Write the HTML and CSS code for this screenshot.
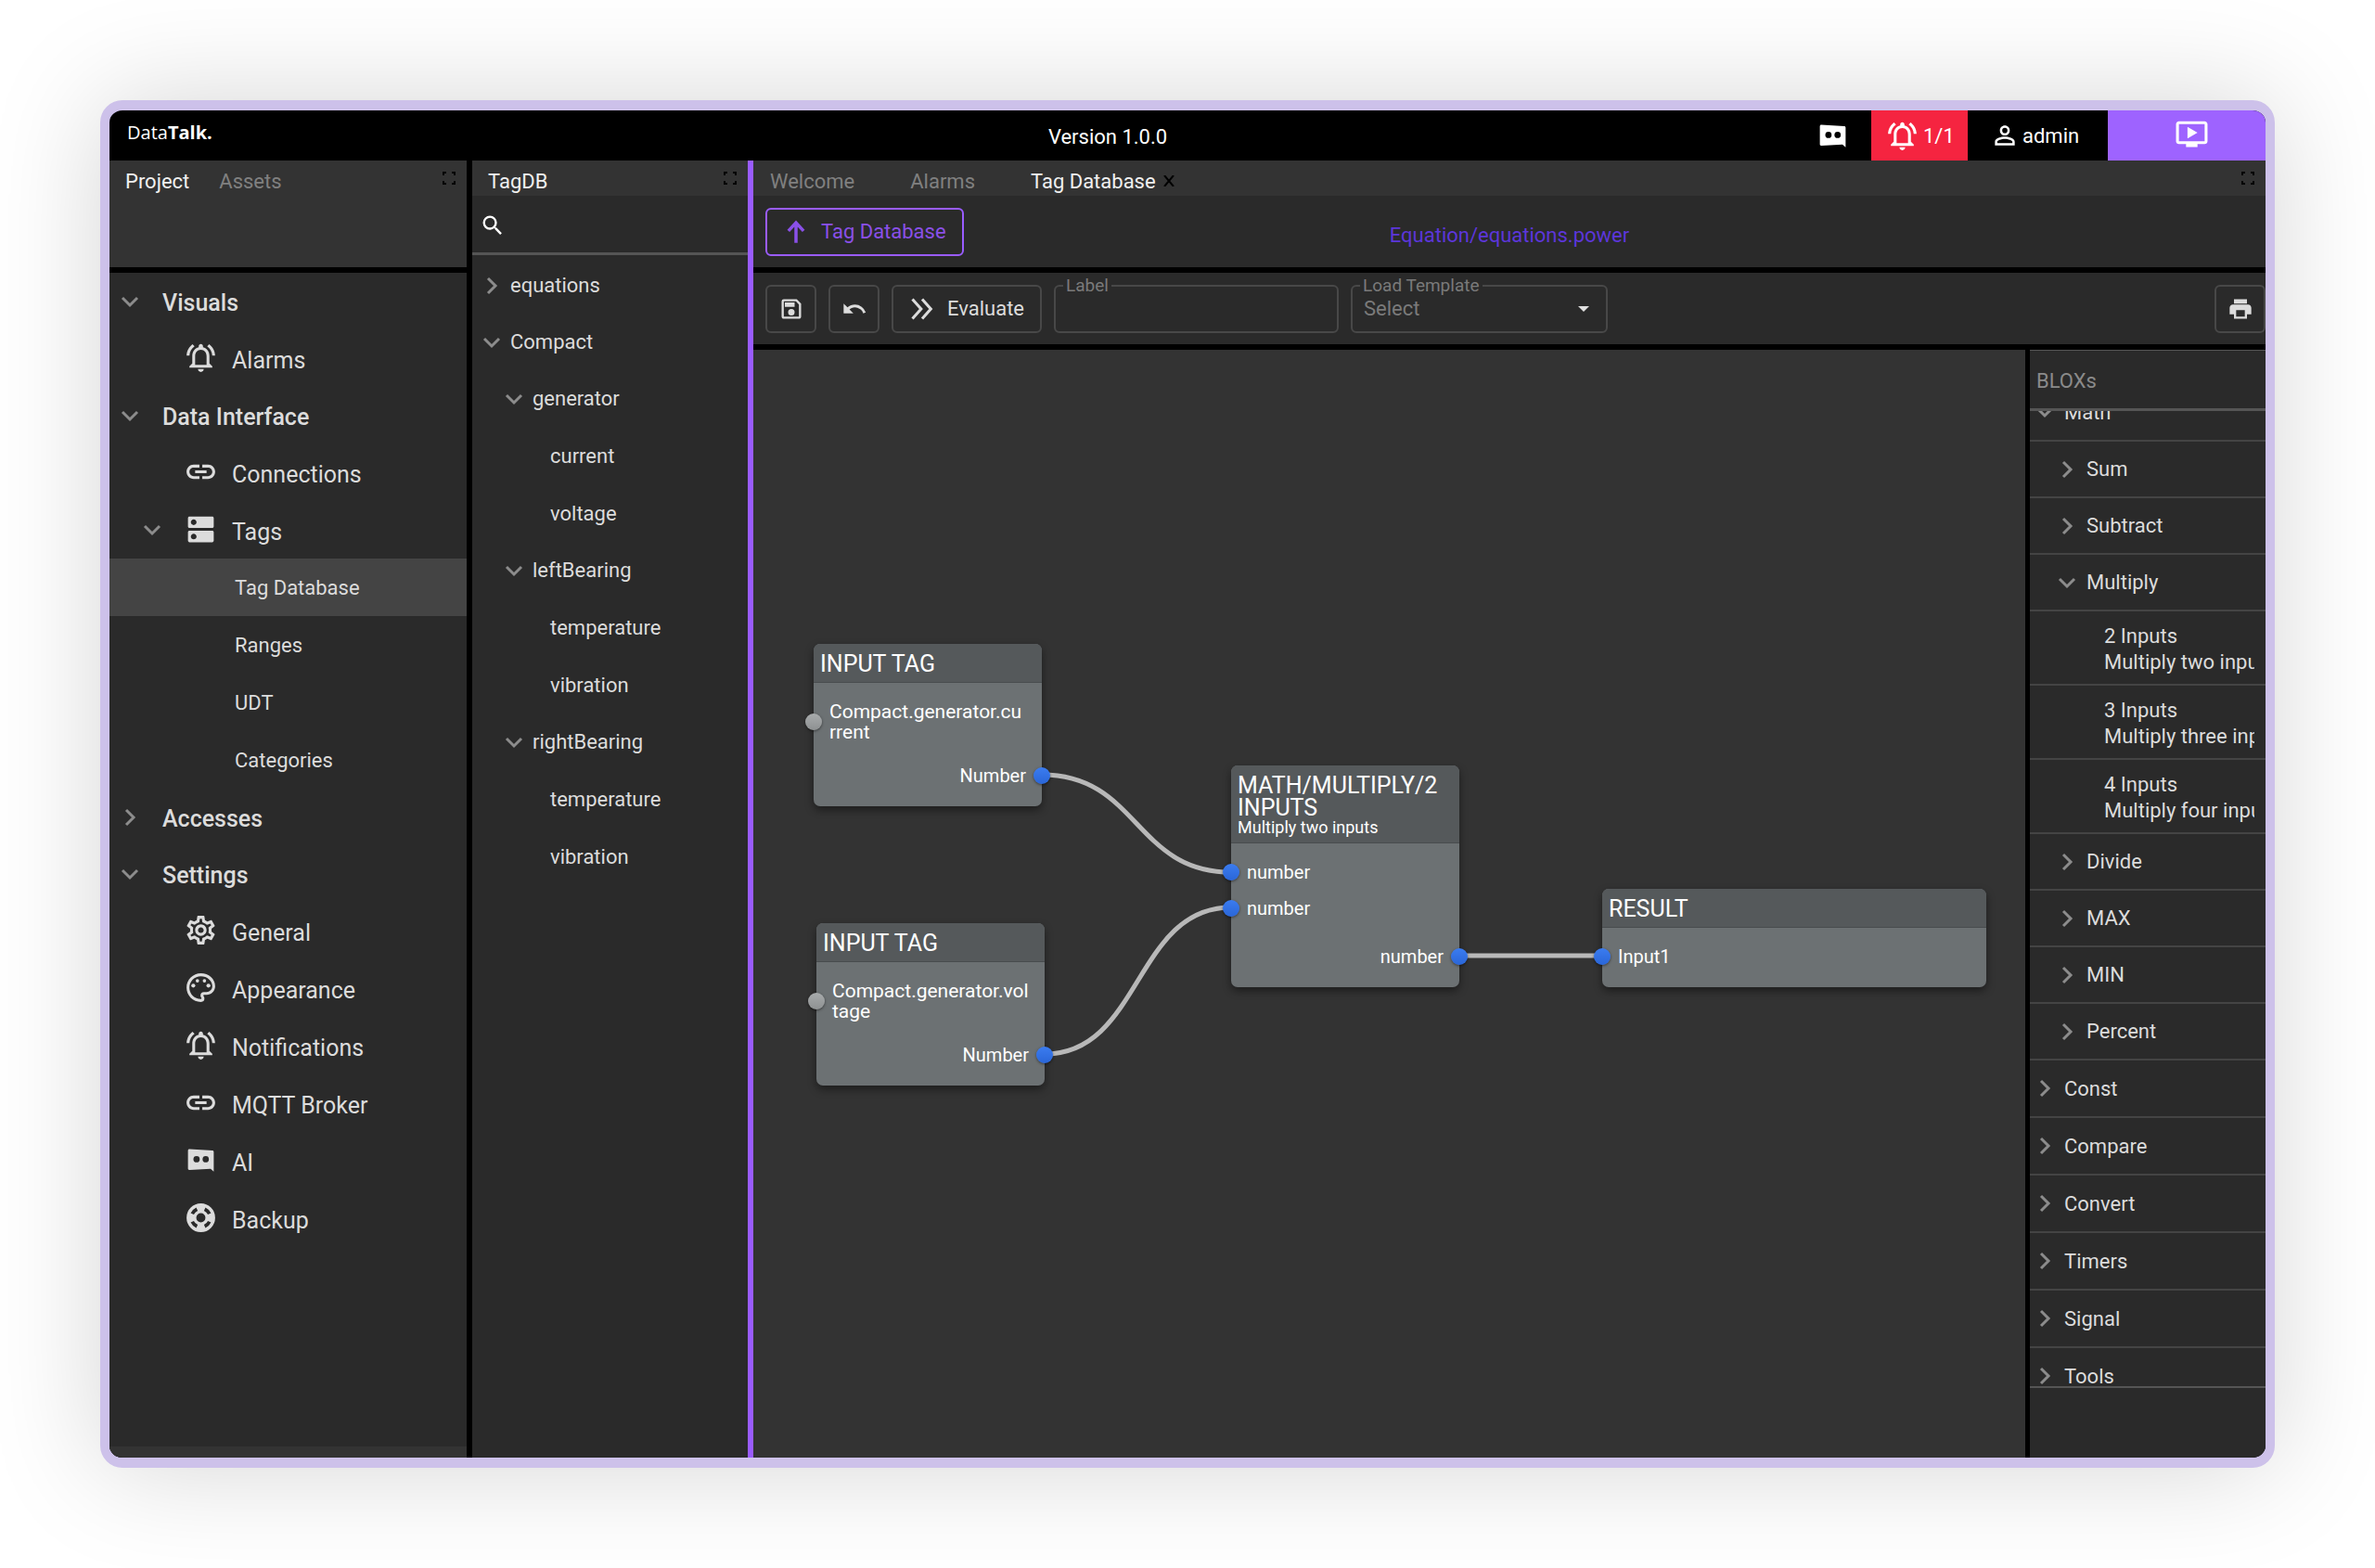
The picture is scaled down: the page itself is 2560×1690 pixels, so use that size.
FILE: index.html
```html
<!DOCTYPE html>
<html lang="en">
<head>
  <meta charset="UTF-8" />
  <meta name="viewport" content="width=device-width, initial-scale=1.0"/>
  <title>DataTalk - Tag Database</title>
  <link rel="stylesheet" href="styles.css">
</head>
<body>
  <!-- icon sprite -->
  <svg class="sprite" aria-hidden="true">
    <symbol id="i-chevron" viewBox="0 0 20 20"><path d="M6 2l8 8-8 8" fill="none" stroke="currentColor" stroke-width="3"/></symbol>
    <symbol id="i-bell" viewBox="0 0 24 24"><path d="M12 22c1.1 0 2-.9 2-2h-4c0 1.1.89 2 2 2zm6-6v-5c0-3.07-1.64-5.64-4.5-6.32V4c0-.83-.67-1.5-1.5-1.5s-1.5.67-1.5 1.5v.68C7.63 5.36 6 7.92 6 11v5l-2 2v1h16v-1l-2-2zm-2 1H8v-6c0-2.48 1.51-4.5 4-4.5s4 2.02 4 4.5v6zM7.58 4.08L6.15 2.65C3.75 4.48 2.17 7.3 2.03 10.5h2c.15-2.65 1.51-4.97 3.55-6.42zm12.39 6.42h2c-.15-3.2-1.73-6.02-4.12-7.85l-1.42 1.43c2.02 1.45 3.39 3.77 3.54 6.42z"/></symbol>
    <symbol id="i-link" viewBox="0 0 24 24"><path d="M17 7h-4v2h4c1.65 0 3 1.35 3 3s-1.35 3-3 3h-4v2h4c2.76 0 5-2.24 5-5s-2.24-5-5-5zm-6 8H7c-1.65 0-3-1.35-3-3s1.35-3 3-3h4V7H7c-2.76 0-5 2.24-5 5s2.24 5 5 5h4v-2zm-3-4h8v2H8z"/></symbol>
    <symbol id="i-dns" viewBox="0 0 24 24"><path d="M20 13H4c-.55 0-1 .45-1 1v6c0 .55.45 1 1 1h16c.55 0 1-.45 1-1v-6c0-.55-.45-1-1-1zM7 19c-1.1 0-2-.9-2-2s.9-2 2-2 2 .9 2 2-.9 2-2 2zM20 3H4c-.55 0-1 .45-1 1v6c0 .55.45 1 1 1h16c.55 0 1-.45 1-1V4c0-.55-.45-1-1-1zM7 9c-1.1 0-2-.9-2-2s.9-2 2-2 2 .9 2 2-.9 2-2 2z"/></symbol>
    <symbol id="i-gear" viewBox="0 0 24 24"><path d="M19.43 12.98c.04-.32.07-.64.07-.98 0-.34-.03-.66-.07-.98l2.11-1.65c.19-.15.24-.42.12-.64l-2-3.46c-.09-.16-.26-.25-.44-.25-.06 0-.12.01-.17.03l-2.49 1c-.52-.4-1.08-.73-1.69-.98l-.38-2.65C14.46 2.18 14.25 2 14 2h-4c-.25 0-.46.18-.49.42l-.38 2.65c-.61.25-1.17.59-1.69.98l-2.49-1c-.06-.02-.12-.03-.18-.03-.17 0-.34.09-.43.25l-2 3.46c-.13.22-.07.49.12.64l2.11 1.65c-.04.32-.07.65-.07.98 0 .33.03.66.07.98l-2.11 1.65c-.19.15-.24.42-.12.64l2 3.46c.09.16.26.25.44.25.06 0 .12-.01.17-.03l2.49-1c.52.4 1.08.73 1.69.98l.38 2.65c.03.24.24.42.49.42h4c.25 0 .46-.18.49-.42l.38-2.65c.61-.25 1.17-.59 1.69-.98l2.49 1c.06.02.12.03.18.03.17 0 .34-.09.43-.25l2-3.46c.12-.22.07-.49-.12-.64l-2.11-1.65zm-1.98-1.71c.04.31.05.52.05.73 0 .21-.02.43-.05.73l-.14 1.13.89.7 1.08.84-.7 1.21-1.27-.51-1.04-.42-.9.68c-.43.32-.84.56-1.25.73l-1.06.43-.16 1.13-.2 1.35h-1.4l-.19-1.35-.16-1.13-1.06-.43c-.43-.18-.83-.41-1.23-.71l-.91-.7-1.06.43-1.27.51-.7-1.21 1.08-.84.89-.7-.14-1.13c-.03-.31-.05-.54-.05-.74s.02-.43.05-.73l.14-1.13-.89-.7-1.08-.84.7-1.21 1.27.51 1.04.42.9-.68c.43-.32.84-.56 1.25-.73l1.06-.43.16-1.13.2-1.35h1.39l.19 1.35.16 1.13 1.06.43c.43.18.83.41 1.23.71l.91.7 1.06-.43 1.27-.51.7 1.21-1.07.85-.89.7.14 1.13zM12 8c-2.21 0-4 1.79-4 4s1.79 4 4 4 4-1.79 4-4-1.79-4-4-4zm0 6c-1.1 0-2-.9-2-2s.9-2 2-2 2 .9 2 2-.9 2-2 2z"/></symbol>
    <symbol id="i-palette" viewBox="0 0 24 24"><path d="M12 22C6.49 22 2 17.51 2 12S6.49 2 12 2s10 4.04 10 9c0 3.31-2.69 6-6 6h-1.77c-.28 0-.5.22-.5.5 0 .12.05.23.13.33.41.47.64 1.06.64 1.67A2.5 2.5 0 0 1 12 22zm0-18c-4.41 0-8 3.59-8 8s3.59 8 8 8c.28 0 .5-.22.5-.5a.54.54 0 0 0-.14-.35c-.41-.46-.63-1.05-.63-1.65a2.5 2.5 0 0 1 2.5-2.5H16c2.21 0 4-1.79 4-4 0-3.86-3.59-7-8-7z"/><circle cx="6.7" cy="10.6" r="1.4"/><circle cx="9.6" cy="7.2" r="1.2"/><circle cx="14.5" cy="7.2" r="1.2"/><circle cx="17.3" cy="10.6" r="1.4"/></symbol>
    <symbol id="i-bot" viewBox="0 0 24 24"><path fill-rule="evenodd" d="M4 4.2L20 5.2c.6 0 1 .4 1 1V20l-2.2-2L4.2 18.8c-.7 0-1.2-.4-1.2-1V5.2c0-.6.4-1 1-1zM9 9.1a2.2 2.2 0 1 0 0 4.4 2.2 2.2 0 1 0 0-4.4zM15.4 9.1a2.2 2.2 0 1 0 0 4.4 2.2 2.2 0 1 0 0-4.4z"/></symbol>
    <symbol id="i-buoy" viewBox="0 0 24 24"><path fill-rule="evenodd" d="M12 2a10 10 0 1 0 0 20 10 10 0 1 0 0-20zM12 8.8a3.2 3.2 0 1 1 0 6.4 3.2 3.2 0 1 1 0-6.4zM8.8 4.9l1 2.2a5.6 5.6 0 0 0-2.7 2.7l-2.2-1a8 8 0 0 1 3.9-3.9zM15.2 4.9a8 8 0 0 1 3.9 3.9l-2.2 1a5.6 5.6 0 0 0-2.7-2.7zM4.9 15.2l2.2-1a5.6 5.6 0 0 0 2.7 2.7l-1 2.2a8 8 0 0 1-3.9-3.9zM19.1 15.2a8 8 0 0 1-3.9 3.9l-1-2.2a5.6 5.6 0 0 0 2.7-2.7z"/></symbol>
    <symbol id="i-user" viewBox="0 0 24 24"><path d="M12 5.9a2.1 2.1 0 1 1 0 4.2 2.1 2.1 0 0 1 0-4.2m0 9c2.97 0 6.1 1.46 6.1 2.1v1.1H5.9V17c0-.64 3.13-2.1 6.1-2.1M12 4C9.79 4 8 5.79 8 8s1.79 4 4 4 4-1.79 4-4-1.79-4-4-4zm0 9c-2.67 0-8 1.34-8 4v3h16v-3c0-2.66-5.33-4-8-4z"/></symbol>
    <symbol id="i-play" viewBox="0 0 24 24"><path d="M21 3H3c-1.11 0-2 .89-2 2v12c0 1.1.89 2 2 2h5v2h8v-2h5c1.1 0 2-.9 2-2V5c0-1.11-.9-2-2-2zm0 14H3V5h18v12zM9 7v8l7-4z"/></symbol>
    <symbol id="i-expand" viewBox="0 0 14 14"><path d="M1 4V1h3M10 1h3v3M13 10v3h-3M4 13H1v-3" fill="none" stroke="currentColor" stroke-width="2"/></symbol>
    <symbol id="i-search" viewBox="0 0 24 24"><path d="M15.5 14h-.79l-.28-.27A6.47 6.47 0 0 0 16 9.5 6.5 6.5 0 1 0 9.5 16c1.61 0 3.09-.59 4.23-1.57l.27.28v.79l5 4.99L20.49 19l-4.99-5zm-6 0a4.5 4.5 0 1 1 0-9 4.5 4.5 0 0 1 0 9z"/></symbol>
    <symbol id="i-up" viewBox="0 0 24 24"><path d="M12 22V4M5 11l7-7.5 7 7.5" fill="none" stroke="currentColor" stroke-width="3"/></symbol>
    <symbol id="i-save" viewBox="0 0 24 24"><path d="M17 3H5a2 2 0 0 0-2 2v14c0 1.1.9 2 2 2h14c1.1 0 2-.9 2-2V7l-4-4zm2 16H5V5h11.17L19 7.83V19zm-7-7a3 3 0 1 0 0 6 3 3 0 0 0 0-6zM6 6h9v4H6z"/></symbol>
    <symbol id="i-undo" viewBox="0 0 24 24"><path d="M12.5 8c-2.65 0-5.05 1-6.9 2.6L2 7v9h9l-3.62-3.62A8 8 0 0 1 20.1 16l2.37-.78A10.5 10.5 0 0 0 12.5 8z"/></symbol>
    <symbol id="i-fast" viewBox="0 0 24 24"><path d="M3 3l8 9-8 9M12 3l8 9-8 9" fill="none" stroke="currentColor" stroke-width="2.6"/></symbol>
    <symbol id="i-print" viewBox="0 0 24 24"><path fill-rule="evenodd" d="M19 8H5c-1.66 0-3 1.34-3 3v6h4v4h12v-4h4v-6c0-1.66-1.34-3-3-3zm-3 11H8v-6h8v6zM6 3h12v4H6z"/></symbol>
  </svg>

  <div class="window">
    <header class="topbar">
      <div class="logo"><span>Data</span>Talk.</div>
      <div class="version">Version 1.0.0</div>
      <button class="top-btn ai" aria-label="AI"><svg class="icon-lg"><use href="#i-bot"/></svg></button>
      <button class="top-btn alert"><svg class="icon-lg"><use href="#i-bell"/></svg>1/1</button>
      <button class="top-btn user"><svg class="icon-md"><use href="#i-user"/></svg>admin</button>
      <button class="top-btn run" aria-label="Run"><svg class="icon-lg"><use href="#i-play"/></svg></button>
    </header>

    <div class="panels">
      <aside class="project">
        <div class="tabs">
          <button class="tab active">Project</button>
          <button class="tab">Assets</button>
          <button class="expand" aria-label="Expand"><svg><use href="#i-expand"/></svg></button>
        </div>
        <div class="project-head"></div>
        <ul class="nav">
          <li><button class="group"><svg class="chev open"><use href="#i-chevron"/></svg>Visuals</button></li>
          <li><a class="item" href="#"><svg class="icon-lg"><use href="#i-bell"/></svg>Alarms</a></li>
          <li><button class="group"><svg class="chev open"><use href="#i-chevron"/></svg>Data Interface</button></li>
          <li><a class="item" href="#"><svg class="icon-lg"><use href="#i-link"/></svg>Connections</a></li>
          <li><a class="item has-children" href="#"><svg class="chev open"><use href="#i-chevron"/></svg><svg class="icon-lg"><use href="#i-dns"/></svg>Tags</a></li>
          <li><a class="leaf selected" href="#">Tag Database</a></li>
          <li><a class="leaf" href="#">Ranges</a></li>
          <li><a class="leaf" href="#">UDT</a></li>
          <li><a class="leaf" href="#">Categories</a></li>
          <li><button class="group"><svg class="chev"><use href="#i-chevron"/></svg>Accesses</button></li>
          <li><button class="group"><svg class="chev open"><use href="#i-chevron"/></svg>Settings</button></li>
          <li><a class="item" href="#"><svg class="icon-lg"><use href="#i-gear"/></svg>General</a></li>
          <li><a class="item" href="#"><svg class="icon-lg"><use href="#i-palette"/></svg>Appearance</a></li>
          <li><a class="item" href="#"><svg class="icon-lg"><use href="#i-bell"/></svg>Notifications</a></li>
          <li><a class="item" href="#"><svg class="icon-lg"><use href="#i-link"/></svg>MQTT Broker</a></li>
          <li><a class="item" href="#"><svg class="icon-lg"><use href="#i-bot"/></svg>AI</a></li>
          <li><a class="item" href="#"><svg class="icon-lg"><use href="#i-buoy"/></svg>Backup</a></li>
        </ul>
      </aside>

      <aside class="tagdb">
        <div class="tabs">
          <button class="tab active">TagDB</button>
          <button class="expand" aria-label="Expand"><svg><use href="#i-expand"/></svg></button>
        </div>
        <label class="search">
          <svg><use href="#i-search"/></svg>
          <input type="text" aria-label="Search tags">
        </label>
        <ul class="tree">
          <li><button><svg class="chev"><use href="#i-chevron"/></svg>equations</button></li>
          <li><button><svg class="chev open"><use href="#i-chevron"/></svg>Compact</button></li>
          <li><button class="sub"><svg class="chev open"><use href="#i-chevron"/></svg>generator</button></li>
          <li><a href="#">current</a></li>
          <li><a href="#">voltage</a></li>
          <li><button class="sub"><svg class="chev open"><use href="#i-chevron"/></svg>leftBearing</button></li>
          <li><a href="#">temperature</a></li>
          <li><a href="#">vibration</a></li>
          <li><button class="sub"><svg class="chev open"><use href="#i-chevron"/></svg>rightBearing</button></li>
          <li><a href="#">temperature</a></li>
          <li><a href="#">vibration</a></li>
        </ul>
      </aside>

      <main class="editor">
        <div class="tabs editor-tabs">
          <button class="tab">Welcome</button>
          <button class="tab">Alarms</button>
          <button class="tab active">Tag Database<svg class="close" viewBox="0 0 12 12"><path d="M1 0l10 12M11 0L1 12"/></svg></button>
          <button class="expand" aria-label="Expand"><svg><use href="#i-expand"/></svg></button>
        </div>

        <div class="crumb-bar">
          <button class="btn btn-primary"><svg><use href="#i-up"/></svg>Tag Database</button>
          <span class="crumb">Equation/equations.power</span>
        </div>

        <div class="toolbar">
          <button class="btn btn-icon" aria-label="Save"><svg><use href="#i-save"/></svg></button>
          <button class="btn btn-icon" aria-label="Undo"><svg><use href="#i-undo"/></svg></button>
          <button class="btn btn-eval"><svg><use href="#i-fast"/></svg>Evaluate</button>
          <div class="field field-label">
            <label for="label">Label</label>
            <input id="label" type="text">
          </div>
          <div class="field field-template">
            <label for="template">Load Template</label>
            <select id="template"><option>Select</option></select>
            <svg class="caret" viewBox="0 0 12 6"><path d="M0 0h12l-6 6z"/></svg>
          </div>
          <button class="btn btn-icon btn-print" aria-label="Print"><svg><use href="#i-print"/></svg></button>
        </div>

        <div class="workspace">
          <div class="canvas">
            <svg class="wires">
              <path d="M311 458C415 458 411 563 515 563"/>
              <path d="M314 759C418 759 411 601 515 601"/>
              <path d="M760 653H915"/>
            </svg>

            <section class="node node-current">
              <h3>INPUT TAG</h3>
              <div class="node-body">
                <div class="in tag"><i class="socket text"></i>Compact.generator.current</div>
                <div class="out">Number<i class="socket"></i></div>
              </div>
            </section>

            <section class="node node-voltage">
              <h3>INPUT TAG</h3>
              <div class="node-body">
                <div class="in tag"><i class="socket text"></i>Compact.generator.voltage</div>
                <div class="out">Number<i class="socket"></i></div>
              </div>
            </section>

            <section class="node node-multiply">
              <h3>MATH/MULTIPLY/2 INPUTS<small>Multiply two inputs</small></h3>
              <div class="node-body">
                <div class="in"><i class="socket"></i>number</div>
                <div class="in"><i class="socket"></i>number</div>
                <div class="out">number<i class="socket"></i></div>
              </div>
            </section>

            <section class="node node-result">
              <h3>RESULT</h3>
              <div class="node-body">
                <div class="in"><i class="socket"></i>Input1</div>
              </div>
            </section>
          </div>

          <aside class="blox">
            <h2>BLOXs</h2>
            <div class="blox-scroll">
              <ul>
                <li><button><svg class="chev open"><use href="#i-chevron"/></svg>Math</button></li>
                <li><button class="sub"><svg class="chev"><use href="#i-chevron"/></svg>Sum</button></li>
                <li><button class="sub"><svg class="chev"><use href="#i-chevron"/></svg>Subtract</button></li>
                <li><button class="sub"><svg class="chev open"><use href="#i-chevron"/></svg>Multiply</button></li>
                <li class="block"><p>2 Inputs<br>Multiply two inputs</p></li>
                <li class="block"><p>3 Inputs<br>Multiply three inputs</p></li>
                <li class="block"><p>4 Inputs<br>Multiply four inputs</p></li>
                <li><button class="sub"><svg class="chev"><use href="#i-chevron"/></svg>Divide</button></li>
                <li><button class="sub"><svg class="chev"><use href="#i-chevron"/></svg>MAX</button></li>
                <li><button class="sub"><svg class="chev"><use href="#i-chevron"/></svg>MIN</button></li>
                <li><button class="sub"><svg class="chev"><use href="#i-chevron"/></svg>Percent</button></li>
                <li><button><svg class="chev"><use href="#i-chevron"/></svg>Const</button></li>
                <li><button><svg class="chev"><use href="#i-chevron"/></svg>Compare</button></li>
                <li><button><svg class="chev"><use href="#i-chevron"/></svg>Convert</button></li>
                <li><button><svg class="chev"><use href="#i-chevron"/></svg>Timers</button></li>
                <li><button><svg class="chev"><use href="#i-chevron"/></svg>Signal</button></li>
                <li><button><svg class="chev"><use href="#i-chevron"/></svg>Tools</button></li>
              </ul>
            </div>
          </aside>
        </div>
      </main>
    </div>
  </div>
</body>
</html>
```
FILE: styles.css
```css
* {
  box-sizing: border-box;
}

body {
  margin: 0;
  padding: 108px;
  min-height: 100vh;
  display: flex;
  background: #fff;
  font-family: Roboto, "Liberation Sans", sans-serif;
  font-size: 22px;
  color: #dcdcdc;
}

ul {
  list-style: none;
  margin: 0;
  padding: 0;
}

button {
  background: none;
  border: none;
  padding: 0;
  margin: 0;
  font: inherit;
  color: inherit;
  text-align: left;
  cursor: pointer;
}

a {
  color: inherit;
  text-decoration: none;
}

svg {
  fill: currentColor;
  flex-shrink: 0;
}

.sprite {
  position: absolute;
  width: 0;
  height: 0;
}

.icon-md {
  width: 32px;
  height: 32px;
}

.icon-lg {
  width: 37px;
  height: 37px;
}

.chev {
  width: 20px;
  height: 20px;
  color: #8c8c8c;
}

.chev.open {
  transform: rotate(90deg);
}

/* window */
.window {
  flex: 1;
  min-width: 0;
  display: flex;
  flex-direction: column;
  background: #000;
  border: 11px solid #cdc1ea;
  border-width: 11px 10px;
  border-radius: 24px;
  overflow: hidden;
  box-shadow: 0 0 120px rgba(0, 0, 0, 0.17);
}

.topbar {
  display: flex;
  height: 54px;
  color: #fff;
}

.logo {
  width: 335px;
  padding: 10px 0 0 19px;
  font-family: "Open Sans", sans-serif;
  font-size: 20px;
  line-height: 28px;
  font-weight: 700;
}

.logo span {
  font-weight: 400;
}

.version {
  flex: 1;
  text-align: center;
  line-height: 58px;
}

.top-btn {
  display: flex;
  align-items: center;
}

.ai {
  width: 82px;
  padding-left: 22px;
}

.alert {
  width: 104px;
  padding-left: 15px;
  gap: 4px;
  background: #f52440;
}

.user {
  width: 151px;
  padding-left: 24px;
  gap: 3px;
}

.run {
  width: 170px;
  padding-left: 72px;
  padding-bottom: 4px;
  background: #9e63ff;
}

.panels {
  flex: 1;
  display: flex;
  min-height: 0;
}

/* tabs */
.tabs {
  display: flex;
  align-items: center;
  height: 38px;
  padding: 0 12px 0 17px;
  gap: 32px;
  background: #333;
  color: #808080;
}

.tab {
  display: flex;
  align-items: center;
  gap: 8px;
  height: 38px;
  padding-top: 6px;
}

.tab.active {
  color: #f0f0f0;
}

.expand {
  margin-left: auto;
  color: #000;
}

.expand svg {
  display: block;
  width: 14px;
  height: 14px;
}

.close {
  width: 12px;
  height: 12px;
  stroke: #000;
  stroke-width: 2px;
}

.editor-tabs {
  padding-left: 18px;
  gap: 60px;
}

/* project tree */
.project {
  width: 385px;
  display: flex;
  flex-direction: column;
  background: #2a2a2a;
  border-bottom: 12px solid #333;
}

.project-head {
  height: 83px;
  background: #333;
  border-bottom: 6px solid #000;
}

.group,
.item,
.leaf {
  display: flex;
  align-items: center;
  width: 100%;
  height: 62px;
}

.group {
  height: 61px;
  padding: 4px 0 0 12px;
  gap: 25px;
  font-size: 25px;
  font-weight: 500;
}

.group .chev {
  margin-bottom: 4px;
}

.item {
  padding: 4px 0 0 80px;
  gap: 15px;
  font-size: 25px;
}

.item .icon-lg {
  margin-bottom: 6px;
}

.has-children {
  padding-left: 36px;
}

.has-children .chev {
  margin: 0 9px 4px 0;
}

.leaf {
  padding-left: 135px;
}

.leaf.selected {
  background: #444;
}

/* tag database tree */
.tagdb {
  width: 309px;
  background: #2a2a2a;
  border-left: 6px solid #000;
  border-right: 6px solid #9a5cff;
}

.search {
  display: flex;
  align-items: center;
  height: 64px;
  padding: 2px 0 0 8px;
  border-bottom: 3px solid #555;
  color: #fff;
}

.search svg {
  width: 28px;
  height: 28px;
}

.search input {
  flex: 1;
  min-width: 0;
  background: none;
  border: none;
  color: inherit;
  font: inherit;
}

.tree {
  padding-top: 2px;
}

.tree button,
.tree a {
  display: flex;
  align-items: center;
  gap: 10px;
  width: 100%;
  height: 61px;
  padding-left: 11px;
}

.tree .sub {
  padding-left: 35px;
}

.tree a {
  height: 62px;
  padding-left: 84px;
}

/* editor */
.editor {
  flex: 1;
  min-width: 0;
  display: flex;
  flex-direction: column;
  background: #2a2a2a;
}

.crumb-bar {
  display: grid;
  grid-template-columns: 1fr auto 1fr;
  align-items: center;
  height: 83px;
  padding: 0 13px;
  border-bottom: 6px solid #000;
}

.crumb {
  padding-top: 8px;
  color: #5c36da;
}

.btn {
  display: flex;
  align-items: center;
  height: 52px;
  border: 2px solid #484848;
  border-radius: 6px;
}

.btn svg {
  width: 28px;
  height: 28px;
}

.btn-primary {
  justify-self: start;
  padding: 0 17px;
  gap: 13px;
  border-color: #9a5cff;
  color: #8a50e8;
}

.btn-icon {
  width: 55px;
  justify-content: center;
}

.btn-eval {
  padding: 0 17px;
  gap: 13px;
}

.btn-print {
  margin-left: auto;
}

.toolbar {
  display: flex;
  align-items: center;
  gap: 13px;
  height: 83px;
  padding: 0 0 0 13px;
  border-bottom: 6px solid #000;
}

.field {
  position: relative;
  height: 52px;
  color: #7a7a7a;
}

.field label {
  position: absolute;
  top: -10px;
  left: 10px;
  padding: 0 3px;
  background: #2a2a2a;
  font-size: 19px;
  line-height: 22px;
}

.field input,
.field select {
  width: 100%;
  height: 52px;
  padding: 0 12px;
  border: 2px solid #484848;
  border-radius: 6px;
  background: none;
  color: inherit;
  font: inherit;
  appearance: none;
}

.field-label {
  width: 307px;
}

.field-template {
  width: 277px;
}

.caret {
  position: absolute;
  top: 23px;
  right: 20px;
  width: 12px;
  height: 6px;
  color: #e0e0e0;
}

.workspace {
  flex: 1;
  display: flex;
  min-height: 0;
}

/* node canvas */
.canvas {
  position: relative;
  flex: 1;
  background: #333;
}

.wires {
  position: absolute;
  width: 100%;
  height: 100%;
  fill: none;
  stroke: #b8b8b8;
  stroke-width: 5px;
}

.node {
  position: absolute;
  width: 246px;
  border-radius: 7px;
  background: #6c7173;
  color: #fff;
  font-size: 20px;
  line-height: 22px;
  box-shadow: 0 4px 10px rgba(0, 0, 0, 0.45);
}

.node h3 {
  margin: 0;
  padding: 10px 7px 7px;
  border-bottom: 1px solid #484c4e;
  border-radius: 7px 7px 0 0;
  background: #55595b;
  font-size: 25px;
  line-height: 24px;
  font-weight: 400;
}

.node small {
  display: block;
  font-size: 18px;
  line-height: 18px;
}

.node-body {
  padding: 20px 0 22px;
}

.in,
.out {
  position: relative;
  padding: 0 17px;
  word-break: break-all;
}

.in.tag {
  padding-right: 16px;
  font-size: 21px;
}

.in + .in {
  margin-top: 17px;
}

.out {
  margin-top: 30px;
  text-align: right;
}

.in.tag + .out {
  margin-top: 25px;
}

.socket {
  position: absolute;
  top: 50%;
  left: -9px;
  width: 18px;
  height: 18px;
  margin-top: -9px;
  border-radius: 50%;
  background: linear-gradient(#3b7cf0, #2a66d8);
  box-shadow: 0 1px 3px rgba(0, 0, 0, 0.5);
}

.out .socket {
  left: auto;
  right: -9px;
}

.socket.text {
  background: linear-gradient(#a8abac, #8e9192);
}

.node-current {
  left: 65px;
  top: 317px;
}

.node-voltage {
  left: 68px;
  top: 618px;
}

.node-multiply {
  left: 515px;
  top: 448px;
}

.node-result {
  left: 915px;
  top: 581px;
  width: 414px;
}

/* block palette */
.blox {
  width: 259px;
  display: flex;
  flex-direction: column;
  padding-bottom: 75px;
  border-left: 5px solid #000;
}

.blox h2 {
  margin: 0;
  padding: 3px 0 0 7px;
  border-top: 1px solid #555;
  border-bottom: 3px solid #555;
  font-size: 22px;
  font-weight: 400;
  line-height: 59px;
  color: #8a8a8a;
}

.blox-scroll {
  flex: 1 1 0;
  min-height: 0;
  overflow: hidden;
  border-bottom: 2px solid #555;
}

/* list is scrolled by half a row */
.blox ul {
  margin-top: -29px;
}

.blox li {
  border-bottom: 2px solid #444;
}

.blox button {
  display: flex;
  align-items: center;
  gap: 11px;
  width: 100%;
  height: 60px;
  padding-left: 6px;
}

.blox .sub {
  height: 59px;
  padding-left: 30px;
}

.block {
  padding: 13px 12px 9px 80px;
}

.block p {
  margin: 0;
  line-height: 28px;
  white-space: nowrap;
  overflow: hidden;
}
```
